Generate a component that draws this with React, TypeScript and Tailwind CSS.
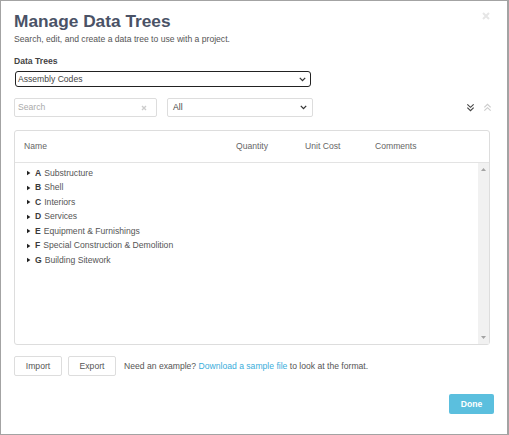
import React from "react";

const Chevron = ({ color = "#333" }: { color?: string }) => (
  <svg width="7" height="5" viewBox="0 0 7 5" className="shrink-0">
    <path d="M0.8 0.9 L3.5 3.6 L6.2 0.9" fill="none" stroke={color} strokeWidth="1.3" />
  </svg>
);

const DoubleChevron = ({ up, color }: { up?: boolean; color: string }) => (
  <svg width="9" height="9" viewBox="0 0 10 10" style={up ? { transform: "rotate(180deg)" } : undefined}>
    <path d="M1.5 1.5 L5 4.8 L8.5 1.5" fill="none" stroke={color} strokeWidth="1.3" />
    <path d="M1.5 5.2 L5 8.5 L8.5 5.2" fill="none" stroke={color} strokeWidth="1.3" />
  </svg>
);

const Tri = () => (
  <svg width="4" height="6" viewBox="0 0 4 6" className="shrink-0">
    <path d="M0 0.8 L3.4 3 L0 5.2 Z" fill="#222" />
  </svg>
);

const rows: [string, string][] = [
  ["A", "Substructure"],
  ["B", "Shell"],
  ["C", "Interiors"],
  ["D", "Services"],
  ["E", "Equipment & Furnishings"],
  ["F", "Special Construction & Demolition"],
  ["G", "Building Sitework"],
];

export default function App() {
  return (
    <div
      className="relative w-[509px] h-[435px] bg-white border border-r-2 border-[#a3a3a3] pl-[13px] text-[8.6px] text-[#555]"
      style={{ fontFamily: '"Liberation Sans", Arial, sans-serif' }}
    >
      {/* close */}
      <div className="absolute right-[17px] top-[11px]">
        <svg width="8" height="8" viewBox="0 0 8 8">
          <path d="M1 1 L7 7 M7 1 L1 7" stroke="#e6e6e6" strokeWidth="2" />
        </svg>
      </div>

      <div className="pt-[10px] text-[17.3px] leading-[20px] font-bold text-[#4a5266]">
        Manage Data Trees
      </div>
      <div className="mt-[2px] leading-[12px] text-[#555]">
        Search, edit, and create a data tree to use with a project.
      </div>
      <div className="mt-[10px] leading-[12px] font-bold text-[#444]">Data Trees</div>

      <div className="mt-[4px] ml-[1px] w-[296px] h-[16px] rounded-[3px] border-[1.5px] border-[#222] flex items-center justify-between pl-[2px] pr-[4px] text-[#444]">
        <span>Assembly Codes</span>
        <Chevron />
      </div>

      <div className="mt-[11px] flex items-center w-[480px]">
        <div className="w-[143px] h-[19px] border border-[#ddd] rounded-[2px] flex items-center justify-between pl-[3px] pr-[9px] text-[#aaa]">
          <span>Search</span>
          <svg width="6" height="6" viewBox="0 0 6 6">
            <path d="M1 1 L5 5 M5 1 L1 5" stroke="#ccc" strokeWidth="1.4" />
          </svg>
        </div>
        <div className="ml-[10px] w-[146px] h-[19px] border border-[#ddd] rounded-[2px] flex items-center justify-between pl-[5px] pr-[5px] text-[#444]">
          <span>All</span>
          <Chevron />
        </div>
        <div className="ml-auto flex items-center gap-[8px] pr-[2px]">
          <DoubleChevron color="#444" />
          <DoubleChevron up color="#ccc" />
        </div>
      </div>

      <div className="mt-[13px] w-[476px] h-[215px] border border-[#ddd] rounded-[3px] flex flex-col">
        <div className="h-[32px] shrink-0 border-b border-[#e3e3e3] flex items-center pl-[9px] text-[#666]">
          <div className="w-[212px]">Name</div>
          <div className="w-[69px]">Quantity</div>
          <div className="w-[70px]">Unit Cost</div>
          <div>Comments</div>
        </div>
        <div className="flex-1 flex min-h-0">
          <div className="flex-1 pt-[3px] pl-[12px]">
            {rows.map(([k, v]) => (
              <div key={k} className="h-[14.5px] flex items-center">
                <Tri />
                <span className="ml-[4px] font-bold text-[#3a3a3a]">{k}</span>
                <span className="ml-[3px] text-[#555]">{v}</span>
              </div>
            ))}
          </div>
          <div className="w-[11px] bg-[#f1f1f1] flex flex-col items-center justify-between py-[5px]">
            <svg width="5" height="3" viewBox="0 0 5 3">
              <path d="M0 3 L2.5 0 L5 3 Z" fill="#a3a3a3" />
            </svg>
            <svg width="5" height="3" viewBox="0 0 5 3">
              <path d="M0 0 L2.5 3 L5 0 Z" fill="#a3a3a3" />
            </svg>
          </div>
        </div>
      </div>

      <div className="mt-[11px] flex items-center">
        <div className="w-[48px] h-[20px] border border-[#ddd] rounded-[2px] flex items-center justify-center text-[#555]">
          Import
        </div>
        <div className="ml-[6px] w-[48px] h-[20px] border border-[#ddd] rounded-[2px] flex items-center justify-center text-[#555]">
          Export
        </div>
        <div className="ml-[8px] text-[#555]">
          Need an example? <span className="text-[#3aaedb]">Download a sample file</span> to look at the format.
        </div>
      </div>

      <div className="mt-[18px] w-[480px] flex justify-end">
        <div className="w-[45px] h-[20px] bg-[#5bbfde] rounded-[2px] flex items-center justify-center text-white font-bold">
          Done
        </div>
      </div>
    </div>
  );
}
